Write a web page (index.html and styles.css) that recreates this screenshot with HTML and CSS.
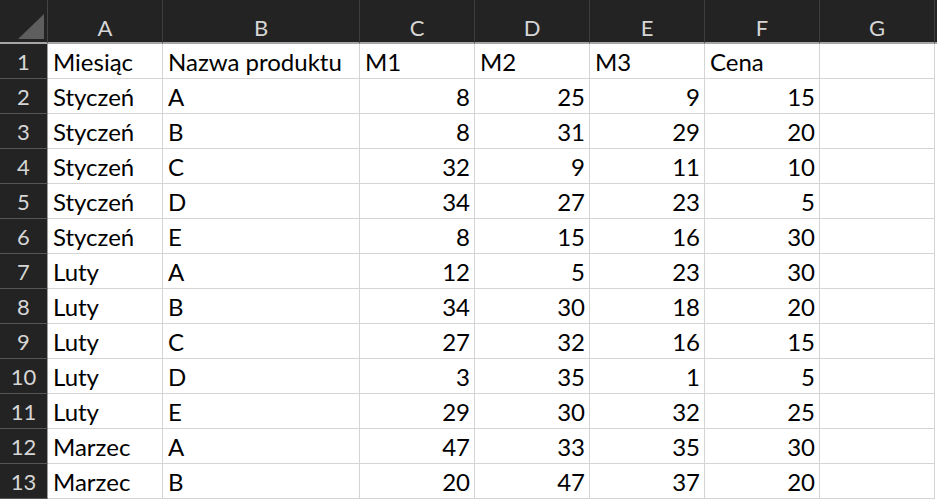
FILE: index.html
```html
<!DOCTYPE html>
<html lang="pl">
<head>
  <meta charset="UTF-8">
  <title>Arkusz1</title>
  <link rel="stylesheet" href="styles.css">
</head>
<body>
  <div class="sheet">
    <div class="head corner"><div class="tri"></div></div>
    <div class="head col">A</div>
    <div class="head col">B</div>
    <div class="head col">C</div>
    <div class="head col">D</div>
    <div class="head col">E</div>
    <div class="head col">F</div>
    <div class="head col">G</div>
    <div class="head tail"></div>

    <div class="rn">1</div><div class="c">Miesiąc</div><div class="c">Nazwa produktu</div><div class="c">M1</div><div class="c">M2</div><div class="c">M3</div><div class="c">Cena</div><div class="c"></div><div class="e"></div>
    <div class="rn">2</div><div class="c">Styczeń</div><div class="c">A</div><div class="c n">8</div><div class="c n">25</div><div class="c n">9</div><div class="c n">15</div><div class="c"></div><div class="e"></div>
    <div class="rn">3</div><div class="c">Styczeń</div><div class="c">B</div><div class="c n">8</div><div class="c n">31</div><div class="c n">29</div><div class="c n">20</div><div class="c"></div><div class="e"></div>
    <div class="rn">4</div><div class="c">Styczeń</div><div class="c">C</div><div class="c n">32</div><div class="c n">9</div><div class="c n">11</div><div class="c n">10</div><div class="c"></div><div class="e"></div>
    <div class="rn">5</div><div class="c">Styczeń</div><div class="c">D</div><div class="c n">34</div><div class="c n">27</div><div class="c n">23</div><div class="c n">5</div><div class="c"></div><div class="e"></div>
    <div class="rn">6</div><div class="c">Styczeń</div><div class="c">E</div><div class="c n">8</div><div class="c n">15</div><div class="c n">16</div><div class="c n">30</div><div class="c"></div><div class="e"></div>
    <div class="rn">7</div><div class="c">Luty</div><div class="c">A</div><div class="c n">12</div><div class="c n">5</div><div class="c n">23</div><div class="c n">30</div><div class="c"></div><div class="e"></div>
    <div class="rn">8</div><div class="c">Luty</div><div class="c">B</div><div class="c n">34</div><div class="c n">30</div><div class="c n">18</div><div class="c n">20</div><div class="c"></div><div class="e"></div>
    <div class="rn">9</div><div class="c">Luty</div><div class="c">C</div><div class="c n">27</div><div class="c n">32</div><div class="c n">16</div><div class="c n">15</div><div class="c"></div><div class="e"></div>
    <div class="rn">10</div><div class="c">Luty</div><div class="c">D</div><div class="c n">3</div><div class="c n">35</div><div class="c n">1</div><div class="c n">5</div><div class="c"></div><div class="e"></div>
    <div class="rn">11</div><div class="c">Luty</div><div class="c">E</div><div class="c n">29</div><div class="c n">30</div><div class="c n">32</div><div class="c n">25</div><div class="c"></div><div class="e"></div>
    <div class="rn">12</div><div class="c">Marzec</div><div class="c">A</div><div class="c n">47</div><div class="c n">33</div><div class="c n">35</div><div class="c n">30</div><div class="c"></div><div class="e"></div>
    <div class="rn">13</div><div class="c">Marzec</div><div class="c">B</div><div class="c n">20</div><div class="c n">47</div><div class="c n">37</div><div class="c n">20</div><div class="c"></div><div class="e"></div>
  </div>
</body>
</html>
```

FILE: styles.css
```css
html, body {
  margin: 0;
  background: #fff;
}
body {
  font-family: 'Lato', 'Noto Sans', sans-serif;
  overflow: hidden;
}
.sheet {
  display: grid;
  grid-template-columns: 48px 115px 197px 115px 115px 115px 115px 115px 1fr;
  grid-template-rows: 44px;
  grid-auto-rows: 35px;
}
.head {
  background: #232323;
  border-bottom: 2px solid #a6a6a6;
  box-sizing: border-box;
  padding-top: 10px;
}
.col {
  display: flex;
  align-items: center;
  justify-content: center;
  color: #d6d6d6;
  font-size: 22px;
  padding-top: 12px;
  border-right: 1px solid #3d3d3d;
  box-shadow: inset 0 10px 0 #232323;
}
.corner {
  border-right: 1px solid #444;
  box-shadow: inset 0 10px 0 #232323;
  position: relative;
}
.tri {
  position: absolute;
  right: 3px;
  bottom: 3px;
  width: 26px;
  height: 25px;
  background: #5e5e5e;
  clip-path: polygon(100% 0, 100% 100%, 0 100%);
}
.rn {
  background: #232323;
  color: #d6d6d6;
  font-size: 22px;
  border-right: 1px solid #9e9e9e;
  border-bottom: 1px solid #555;
  box-sizing: border-box;
  display: flex;
  align-items: flex-end;
  justify-content: center;
  padding-bottom: 3px;
}
.c {
  border-right: 1px solid #d4d4d4;
  border-bottom: 1px solid #d4d4d4;
  box-sizing: border-box;
  color: #000;
  font-size: 24px;
  padding: 0 4px 2px 5px;
  display: flex;
  align-items: flex-end;
  white-space: nowrap;
}
.n {
  justify-content: flex-end;
}
.e {
  background: #fff;
}
```
